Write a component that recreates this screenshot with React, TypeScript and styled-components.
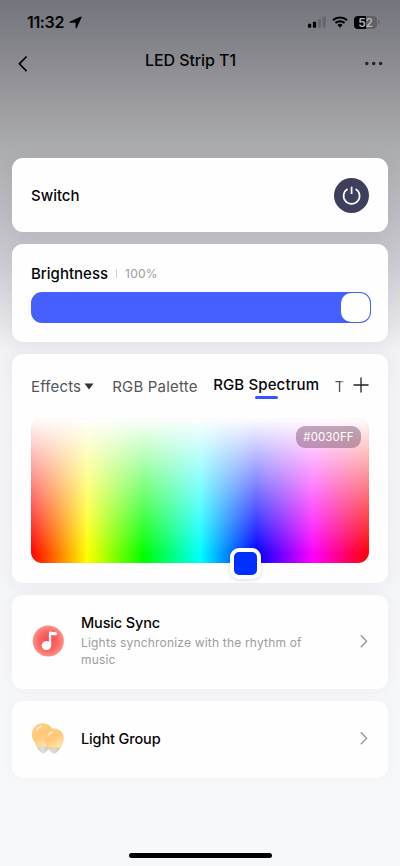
import React from "react";
import styled, { createGlobalStyle } from "styled-components";

const GlobalStyle = createGlobalStyle`
  * { box-sizing: border-box; }
  body { margin: 0; }
`;

const Screen = styled.main`
  width: 400px;
  height: 866px;
  display: flex;
  flex-direction: column;
  overflow: hidden;
  color: #050506;
  font-family: Inter, "Liberation Sans", sans-serif;
  background: linear-gradient(180deg, #74747d 0, #84848b 45px, #96969b 90px, #adaeb1 152px, #c3c2c9 240px, #f1f1f4 350px, #f5f5f8 400px, #f4f5f7 590px, #f7f8fa 780px, #f7f8fa 866px);
`;

const StatusBar = styled.header`
  height: 42px;
  flex: none;
  padding: 2px 20.5px 0 27px;
  display: flex;
  align-items: center;
`;

const Clock = styled.time`
  font-size: 16px;
  font-weight: 600;
  line-height: 20px;
  letter-spacing: -0.35px;
`;

const LocationIcon = styled.svg`
  margin-left: 5px;
`;

const StatusIcons = styled.div`
  margin-left: auto;
  display: flex;
  align-items: center;
  gap: 6px;
`;

const Battery = styled.div`
  display: flex;
  align-items: center;
  gap: 1px;
`;

const BatteryBody = styled.div`
  width: 23px;
  height: 13px;
  border-radius: 4px;
  display: flex;
  align-items: center;
  justify-content: center;
  background: linear-gradient(90deg, #030304 52%, #606066 52%);
  color: #b3b3b7;
  font-size: 12px;
  font-weight: 600;
  letter-spacing: -0.2px;
  line-height: 13px;
`;

const BatteryTip = styled.i`
  width: 1.5px;
  height: 4px;
  border-radius: 0 2px 2px 0;
  background: #68686e;
`;

const NavBar = styled.nav`
  height: 116px;
  flex: none;
  padding: 12px 17px 0 17px;
  display: grid;
  grid-template-columns: 40px 1fr 40px;
  align-items: start;
`;

const Title = styled.h1`
  margin: -5px 19px 0 0;
  text-align: center;
  font-size: 16px;
  font-weight: 500;
  line-height: 22px;
  letter-spacing: -0.08px;
`;

const IconButton = styled.button`
  padding: 0;
  border: 0;
  background: none;
  display: flex;
  color: inherit;
`;

const MoreButton = styled(IconButton)`
  justify-self: end;
  padding-top: 5px;
`;

const CardList = styled.div`
  padding: 0 12px;
  display: flex;
  flex-direction: column;
  gap: 11.5px;
`;

const Card = styled.section<{ $height: number; $shade?: number }>`
  height: ${(p) => p.$height}px;
  padding: 0 19px;
  border-radius: 11px;
  background: #fefefe;
  box-shadow: 0 0 16px rgba(70, 60, 110, ${(p) => p.$shade ?? 0.07});
`;

const SwitchCard = styled(Card)`
  display: flex;
  align-items: center;
  justify-content: space-between;
`;

const Label = styled.h2<{ $size?: number; $spacing?: number }>`
  margin: 0;
  font-size: ${(p) => p.$size ?? 15}px;
  font-weight: 500;
  line-height: 20px;
  letter-spacing: ${(p) => p.$spacing ?? 0}px;
`;

const SwitchLabel = styled(Label)`
  padding-top: 2px;
`;

const PowerButton = styled(IconButton)`
  width: 35px;
  height: 35px;
  border-radius: 50%;
  align-items: center;
  justify-content: center;
  background: #3e3f5d;
  color: #fff;
`;

const BrightnessCard = styled(Card)`
  padding: 20px 17px 0 19px;
`;

const BrightnessHeader = styled.div`
  display: flex;
  align-items: center;
  margin-bottom: 8px;
`;

const Divider = styled.i`
  width: 1px;
  height: 9px;
  margin: 0 8px;
  background: #cfcfd2;
`;

const Percent = styled.span`
  color: #9c9c9f;
  font-size: 12px;
  line-height: 20px;
  letter-spacing: 0.2px;
`;

const Slider = styled.div`
  height: 31px;
  padding: 1px;
  border-radius: 11px;
  display: flex;
  justify-content: flex-end;
  background: #4560fe;
`;

const SliderThumb = styled.div`
  width: 29px;
  height: 29px;
  border-radius: 10px;
  background: #fff;
`;

const ColorCard = styled(Card)`
  padding-top: 19px;
`;

const Tabs = styled.div`
  height: 45px;
  display: flex;
  align-items: flex-start;
`;

const Tab = styled.div<{ $left: number; $spacing: number }>`
  margin-left: ${(p) => p.$left}px;
  padding-top: 4px;
  display: flex;
  align-items: center;
  flex: none;
  color: #555558;
  font-size: 15px;
  line-height: 20px;
  letter-spacing: ${(p) => p.$spacing}px;
  white-space: nowrap;
`;

const Caret = styled.svg`
  margin-left: 3px;
`;

const ActiveTab = styled(Tab)`
  padding-top: 2px;
  flex-direction: column;
  color: #08080a;
  font-weight: 500;

  &::after {
    content: "";
    width: 23px;
    height: 3px;
    margin-top: 1px;
    border-radius: 2px;
    background: #3850ff;
  }
`;

const ClippedTab = styled(Tab)`
  width: 10px;
  overflow: hidden;
  mask-image: linear-gradient(90deg, #000 50%, transparent 105%);
`;

const AddButton = styled(IconButton)`
  margin: 4px 0 0 auto;
`;

const Spectrum = styled.div`
  position: relative;
  height: 145px;
  padding: 8px;
  display: flex;
  justify-content: flex-end;
  align-items: flex-start;
  border-radius: 11px;
  background:
    linear-gradient(180deg, #fefefe 0%, rgba(255, 255, 255, 0) 94%),
    linear-gradient(90deg, #f00, #ff0 16.67%, #0f0 33.33%, #0ff 50%, #00f 66.67%, #f0f 83.33%, #f00);
  box-shadow: inset 0 0 1px rgba(255, 90, 100, 0.3);
`;

const ColorValue = styled.output`
  width: 65px;
  height: 22px;
  border-radius: 9px;
  background: rgba(105, 65, 90, 0.42);
  color: #fff;
  font-size: 11.5px;
  line-height: 22px;
  letter-spacing: 0.1px;
  text-align: center;
`;

const ColorHandle = styled.div`
  position: absolute;
  left: 199px;
  top: 130px;
  width: 31px;
  height: 31px;
  border: 4px solid #fff;
  border-radius: 9px;
  background: #0030ff;
  box-shadow: 0 1px 4px rgba(30, 30, 60, 0.15);
`;

const LinkCard = styled(Card)`
  display: grid;
  grid-template-columns: 50px 1fr 10px;
  align-items: center;
`;

const LinkText = styled.div`
  padding-bottom: 2px;
`;

const Description = styled.p`
  width: 240px;
  margin: 1px 0 0;
  color: #9c9c9f;
  font-size: 12px;
  line-height: 17.5px;
  letter-spacing: 0.19px;
`;

const HomeIndicator = styled.div`
  width: 143px;
  height: 5px;
  margin: auto auto 8px;
  flex: none;
  border-radius: 3px;
  background: #000;
`;

const Chevron = () => (
  <svg width="10" height="16" viewBox="0 0 10 16" fill="none" stroke="#949497" strokeWidth="1.3">
    <path d="M1.8 1.2l5.8 6-5.8 6" />
  </svg>
);

const MusicIcon = () => (
  <svg width="34" height="34" viewBox="0 0 34 34">
    <defs>
      <radialGradient id="disc">
        <stop offset="0" stopColor="#ff454b" />
        <stop offset=".6" stopColor="#fa6663" />
        <stop offset="1" stopColor="#ff9189" />
      </radialGradient>
    </defs>
    <circle cx="17.3" cy="16" r="15.6" fill="url(#disc)" />
    <ellipse cx="15.4" cy="20.6" rx="4.8" ry="4.5" fill="#fff" />
    <path d="M17.9 20.5V7.7c0-1.1 1-1.5 2-1.1 1.7.8 3.9.2 5.2.6 1.5.6 1.1 2.8-.3 3-1.5.2-3.1-.1-4.6-.5V20.5z" fill="#fff" />
  </svg>
);

const BulbsIcon = () => (
  <svg width="34" height="34" viewBox="0 0 34 34">
    <defs>
      <linearGradient id="glass" x1="0" y1="0" x2=".6" y2="1">
        <stop stopColor="#ffd18b" />
        <stop offset=".55" stopColor="#ffc875" />
        <stop offset="1" stopColor="#ffe3a7" />
      </linearGradient>
      <linearGradient id="base">
        <stop stopColor="#d3cec3" />
        <stop offset=".45" stopColor="#e2ded4" />
        <stop offset="1" stopColor="#c8c4bb" />
      </linearGradient>
    </defs>
    <path d="M5 23h14.2l-1.7 4.5-3.3 3c-1.1 1.4-3 1.4-4 0L7 27.5z" fill="url(#base)" />
    <path d="M.8 12.1a10.9 10.9 0 0 1 21.8 0c0 6-2.3 8-3.3 12.2H5.2C4.2 19.7.8 17.7.8 12.1z" fill="url(#glass)" />
    <path d="M16.9 25.5h12.4l-1.7 3-2.3 2.2c-1.2 1.3-3.2 1.3-4.4 0L18.7 28.5z" fill="url(#base)" />
    <path d="M13.8 16a9.3 9.3 0 0 1 18.6 0c0 4.8-2.5 6.4-3.2 9.8H17C16.2 22.4 13.8 20.8 13.8 16z" fill="url(#glass)" stroke="#f8bd6c" strokeWidth=".5" />
    <path d="M5.9 8.1c1-2 2.4-3.3 4.1-3.7M17.8 13c.7-1.5 1.9-2.4 3.3-2.7" fill="none" stroke="#fff4dc" strokeWidth="1.4" strokeLinecap="round" />
  </svg>
);

export default function App() {
  return (
    <>
      <GlobalStyle />
      <Screen>
        <StatusBar>
          <Clock>11:32</Clock>
          <LocationIcon width="13" height="13" viewBox="0 0 13 13">
            <path d="M12.3.6c.4.1.4.5.2.9L7.9 11.8c-.4.9-1.3.7-1.3-.2V6.8H1.3C.3 6.8.1 6 1 5.5L11.5.7z" />
          </LocationIcon>
          <StatusIcons>
            <svg width="18" height="12" viewBox="0 0 18 12">
              <rect y="7.8" width="3.2" height="4" rx=".8" />
              <rect x="4.9" y="5.8" width="3.2" height="6" rx=".8" />
              <rect x="9.8" y="3" width="3.2" height="8.8" rx=".8" fill="#66666c" />
              <rect x="14.6" y=".5" width="3.2" height="11.3" rx=".8" fill="#66666c" />
            </svg>
            <svg width="16" height="12" viewBox="0 0 16 12">
              <g fill="none" stroke="#000" strokeWidth="2.1">
                <path d="M1 4.3a10.2 10.2 0 0 1 14 0" />
                <path d="M3.5 7a6.5 6.5 0 0 1 9 0" />
              </g>
              <path d="M5.5 9a3.7 3.7 0 0 1 5 0L8 11.8z" />
            </svg>
            <Battery>
              <BatteryBody>52</BatteryBody>
              <BatteryTip />
            </Battery>
          </StatusIcons>
        </StatusBar>
        <NavBar>
          <IconButton aria-label="Back">
            <svg width="12" height="20" viewBox="0 0 12 20" fill="none" stroke="currentColor" strokeWidth="1.7">
              <path d="M9.6 2.5L2.4 9.8l7.2 7.3" />
            </svg>
          </IconButton>
          <Title>LED Strip T1</Title>
          <MoreButton aria-label="More">
            <svg width="18" height="9" viewBox="0 0 18 9" fill="#242428">
              <circle cx="1.8" cy="4.6" r="1.75" />
              <circle cx="8.7" cy="4.6" r="1.75" />
              <circle cx="15.6" cy="4.6" r="1.75" />
            </svg>
          </MoreButton>
        </NavBar>
        <CardList>
          <SwitchCard $height={74}>
            <SwitchLabel>Switch</SwitchLabel>
            <PowerButton aria-label="Power">
              <svg width="20" height="20" viewBox="0 0 20 20" fill="none" stroke="currentColor" strokeWidth="1.7">
                <path d="M5.6 4a8 8 0 1 0 8 0M9.6 1.7v7.4" />
              </svg>
            </PowerButton>
          </SwitchCard>
          <BrightnessCard $height={98.5}>
            <BrightnessHeader>
              <Label>Brightness</Label>
              <Divider />
              <Percent>100%</Percent>
            </BrightnessHeader>
            <Slider>
              <SliderThumb />
            </Slider>
          </BrightnessCard>
          <ColorCard $height={229.5}>
            <Tabs>
              <Tab $left={0} $spacing={0.15}>
                Effects
                <Caret width="10" height="7" viewBox="0 0 10 7">
                  <path d="M.5.5h9L5 6.5z" fill="#333335" />
                </Caret>
              </Tab>
              <Tab $left={18} $spacing={0.2}>RGB Palette</Tab>
              <ActiveTab $left={15.5} $spacing={0.13}>RGB Spectrum</ActiveTab>
              <ClippedTab $left={15.5} $spacing={0}>T</ClippedTab>
              <AddButton aria-label="Add">
                <svg width="16" height="16" viewBox="0 0 16 16" fill="none" stroke="#202022" strokeWidth="1.3">
                  <path d="M8 .5v15M.5 8h15" />
                </svg>
              </AddButton>
            </Tabs>
            <Spectrum>
              <ColorValue>#0030FF</ColorValue>
              <ColorHandle />
            </Spectrum>
          </ColorCard>
          <LinkCard $height={94.5} $shade={0.04}>
            <MusicIcon />
            <LinkText>
              <Label $size={14.5} $spacing={-0.15}>Music Sync</Label>
              <Description>Lights synchronize with the rhythm of music</Description>
            </LinkText>
            <Chevron />
          </LinkCard>
          <LinkCard $height={77.5} $shade={0.03}>
            <BulbsIcon />
            <Label $size={14.5} $spacing={-0.13}>Light Group</Label>
            <Chevron />
          </LinkCard>
        </CardList>
        <HomeIndicator />
      </Screen>
    </>
  );
}
